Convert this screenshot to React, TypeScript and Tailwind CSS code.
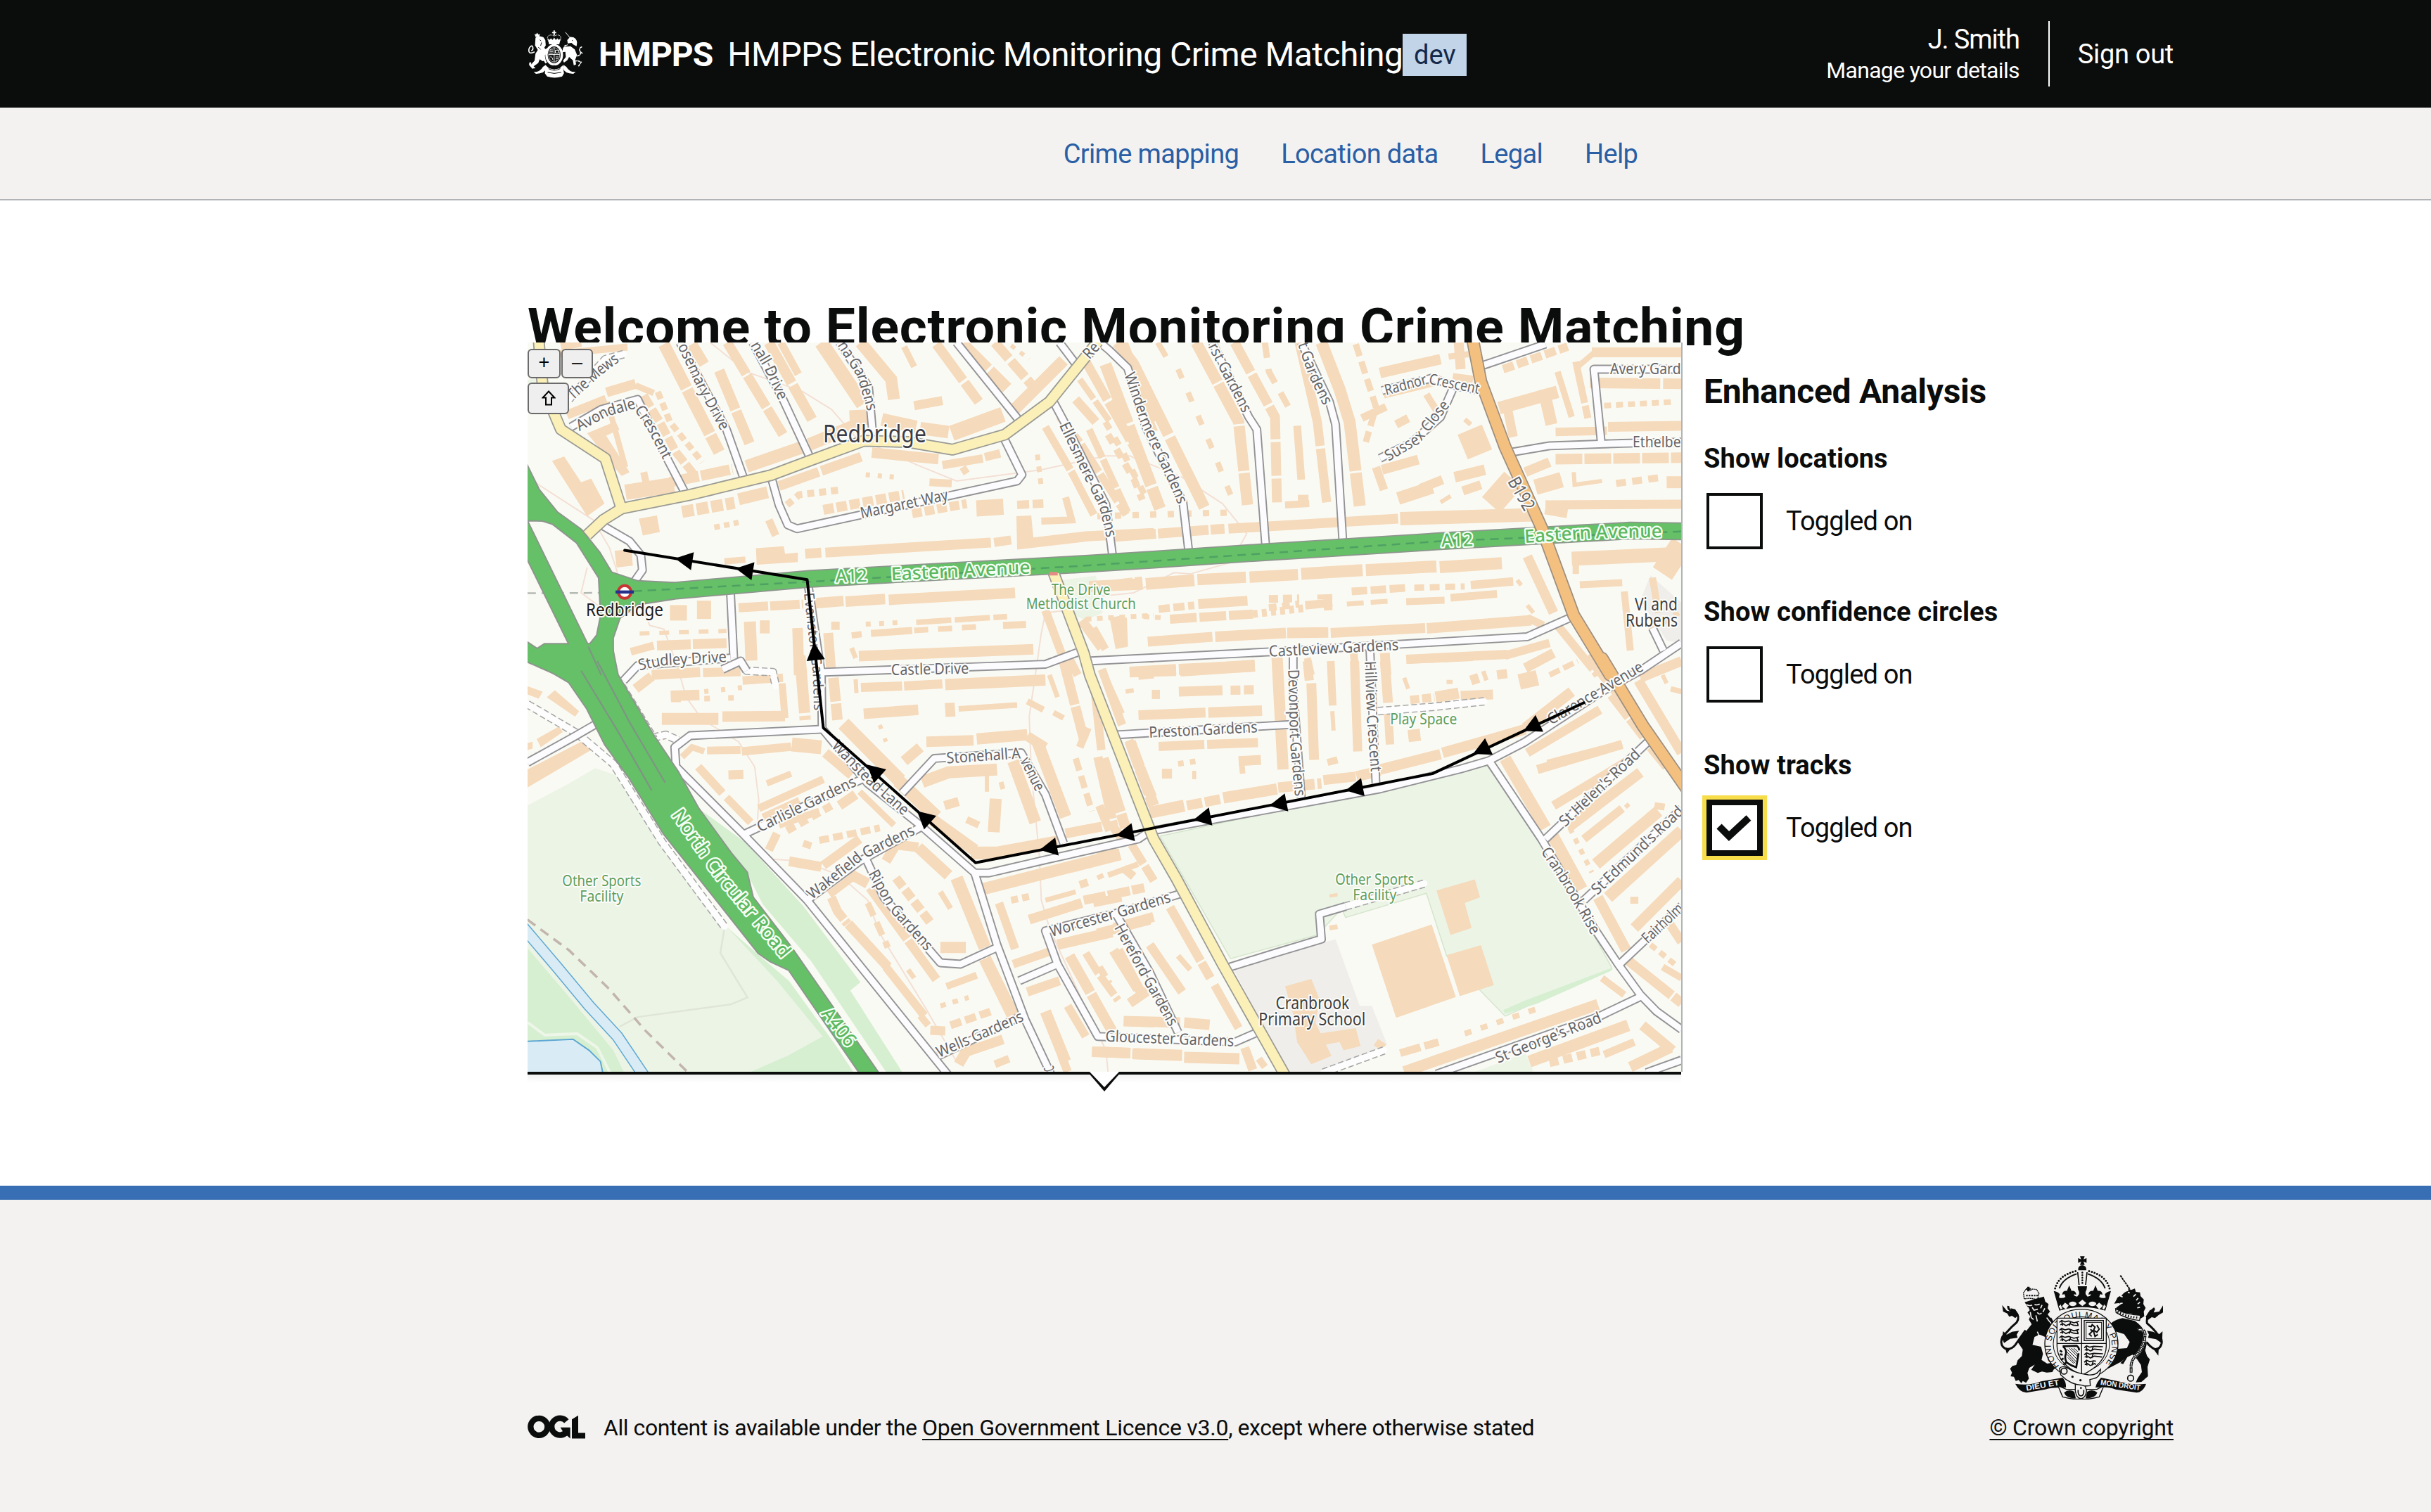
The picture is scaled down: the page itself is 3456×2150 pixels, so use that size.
type Pt = [number, number];
type Region = "A" | "B" | "C" | "D";

// Map sheets: origin of every sheet and its units per pixel.
const SHEETS: Record<Region, [number, number, number, number]> = {
  A: [740, 400, 1.7422, 2.8],
  B: [1560, 400, 1.7422, 2.8],
  C: [740, 940, 1.7422, 2.529],
  D: [1560, 940, 1.7422, 2.529],
};

function pts(src: string): Pt[] {
  let region: Region = "A";
  const out: Pt[] = [];
  for (const tok of src.trim().split(/\s+/)) {
    if (tok === "A" || tok === "B" || tok === "C" || tok === "D") {
      region = tok;
      continue;
    }
    const [x, y] = tok.split(",").map(Number);
    const [ox, oy, sx, sy] = SHEETS[region];
    out.push([ox + x / sx, oy + y / sy]);
  }
  return out;
}

const line = (src: string, close = false) =>
  "M" + pts(src).map((p) => p[0].toFixed(1) + " " + p[1].toFixed(1)).join("L") + (close ? "Z" : "");

const length = (src: string) => {
  const p = pts(src);
  let sum = 0;
  for (let i = 1; i < p.length; i++) sum += Math.hypot(p[i][0] - p[i - 1][0], p[i][1] - p[i - 1][1]);
  return sum;
};

const MINOR = [
  "A 395,244 510,590 552,780",
  "A 575,244 650,470 715,695",
  "A 790,244 862,420 872,600",
  "A 1080,244 1238,560",
  "A 1335,244 1378,335",
  "B 0,235 30,275 75,345 120,580 212,880 226,1070",
  "A 1320,480 1350,570 1450,890 1466,1090",
  "A 1196,620 1242,770 1230,795 685,985 662,970 640,890 620,775",
  "A 125,580 200,510 290,470 345,650 405,835",
  "A 200,970 270,1035 298,1090 302,1150 280,1200",
  "A 520,1240 528,1500",
  "A 255,1590 290,1530 520,1500",
  "A 712,1205 745,1560 C 747,250",
  "A 740,1557 1300,1525 1378,1478",
  "A 1405,1512 B 430,1475 1065,1415 1170,1340",
  "B 285,244 375,540 395,590 417,1055",
  "B 505,244 575,480 590,570 608,1035",
  "B 955,335 1110,250",
  "B 1447,350 1230,350 1248,640",
  "B 1020,682 1120,655 1300,645 1447,640",
  "B 705,435 830,385 880,415 950,435",
  "B 880,430 850,540 780,640 700,705",
  "B 1375,1380 1402,1470",
  "C 747,245 420,268 382,310 385,380 550,620 710,860 1060,1490",
  "C 747,243 860,440 990,590 1125,762 1180,1020 1250,1290 1315,1490",
  "C 1125,762 1160,762 1300,715 1530,640 D 130,612 400,540 700,460 900,388 970,358 1060,290 1250,110 B 1350,1545 1447,1440",
  "C 945,475 1025,350 1240,330 1300,480 1345,655",
  "C 555,622 860,415",
  "C 710,860 840,720 1000,590",
  "C 855,710 900,850 1040,1085 1090,1090 1180,1030",
  "C 1235,1150 1330,1090 1300,970 1480,905 D 210,835",
  "C 1330,1090 1430,1350 1770,1370 1825,1335",
  "C 1475,910 D 130,1120 200,1335",
  "C 1035,1420 1250,1270",
  "C 17,365 135,270 185,228",
  "D 50,265 480,228",
  "B 485,1490 D 485,100 505,490",
  "B 675,1460 D 690,440",
  "D 970,358 1100,640 1230,960 1290,1090 1345,1200 1385,1260 1447,1325",
  "D 1110,640 1380,268",
  "D 1205,860 1447,530",
  "D 1290,1095 1447,880",
  "D 1348,1205 1240,1280 840,1485",
  "D 1360,1480 1447,1435",
  "D 325,1102 440,1050 555,1000 550,910 615,882",
  "C 500,30 545,0 560,35",
];

const DASHED = [
  "A 120,470 210,310 255,290",
  "C 17,155 140,260 230,370 350,650 505,955",
  "C 330,275 360,265 390,285",
  "C 250,90 330,280",
  "C 545,5 560,35 625,40 632,90",
  "D 615,882 810,800",
  "D 695,180 830,165 958,145",
  "D 560,1480 710,1400",
];

const YELLOW = [
  "A 45,235 55,420 100,590 210,705 248,895",
  "A 165,1010 205,950 250,905 420,850 620,772 720,712 850,635 960,640 1070,670 1200,610 1310,480 1380,340 1430,240",
  "A 1320,1160 1395,1480 C 1410,50 1568,640 D 195,780 310,1090 465,1490",
];

const B192 = "B 930,235 950,400 1010,660 1100,980 1180,1330 1270,1568 D 1250,-10 1350,230 1460,460";
const A12 = "A 360,1235 720,1184 1400,1125 1568,1108 B 400,1080 850,1035 1200,1003 1320,993 1460,996";
const GREEN_A =
  "A 10,715 45,830 90,920 150,990 195,1080 225,1160 290,1195 380,1202 380,1263 290,1285 245,1340 228,1420 228,1500 245,1600 130,1600 90,1565 10,1508 10,1432 60,1485 100,1500 135,1490 10,1080 10,935 168,1455 190,1410 200,1330 195,1180 140,1040 80,965 55,952 10,950";
const GREEN_C =
  "C 10,-15 75,37 120,75 165,170 210,300 270,420 355,620 470,830 590,1050 620,1080 665,1110 845,1490 890,1490 670,1030 575,850 560,760 520,690 440,530 390,400 330,270 240,50 225,-60 60,-60";

// Building footprints: "points | depth | dash pattern"
const ROWS = `
A 355,250 492,680|17|70 3
A 425,250 455,330|15
A 492,355 567,645|15|60 3
A 512,244 650,610|14|52 3
A 615,244 722,550|15|66 4
A 645,244 688,370|11
A 745,244 848,490|20
A 842,244 918,390 925,470|17
A 950,260 975,340|9
A 1030,250 1135,480|14|64 4
A 1095,250 1205,425|17|50 4
A 1175,244 1270,420|14|30 5
A 1215,255 1260,310|6|7 9
A 560,737 695,662|18
A 715,650 850,560|18
A 815,545 870,540|22
A 895,550 980,580|18
A 990,585 1060,600|18
A 1068,605 1195,530|22
A 1220,515 1345,315|17
A 975,495 1045,475|13
A 370,800 525,748|15|42 3
A 260,840 380,810|22
A 305,760 315,830|10
A 540,868 612,840|17
A 640,815 850,695|14|60 4
A 870,682 1035,708|15
A 1045,732 1145,705|12
A 1095,740 1105,765|10
A 1150,700 1188,685|12
A 400,918 530,882|17|17 4
A 115,532 212,470|13
A 213,442 285,408|14
A 285,415 330,445|9
A 85,290 265,262|10
A 100,260 150,244|12
A 305,455 345,560 385,680 430,770|12|19 4
A 340,440 370,560 450,720|9|11 6
A 215,480 260,740|8
A 755,1080 1165,1040|14
A 1173,1040 1215,1030|13
A 705,1085 745,1080|14
A 505,1115 557,1108|9
A 750,910 950,850|14|15 4
A 660,890 690,850 795,830|10|10 7
A 970,925 1105,885|13|14 4
A 1013,800 1068,805|11
A 615,950 632,1012|11
A 480,980 540,960|8|8 6
A 855,770 930,780|7|6 11
A 1230,890 1295,885|12|17 5
A 1350,860 1365,950 1290,955|10
A 1280,690 1290,820|7|8 9
A 540,1300 700,1285|13|42 3
A 705,1285 800,1273|15
A 805,1275 903,1265|15
A 912,1268 1225,1240|15
A 370,1320 412,1320|22
A 437,1308 472,1308|26
A 338,1450 515,1440|14|48 3
A 273,1475 330,1450|11
A 295,1402 510,1392|6|14 14
A 568,1355 572,1510|17
A 605,1350 605,1402|14
A 686,1380 690,1568|15|80 4
A 762,1400 770,1568|14
A 780,1355 780,1388|12
A 820,1410 845,1405|9
A 868,1402 970,1390|10
A 855,1365 950,1358|7|7 12
A 980,1358 1205,1335|8|50 5
A 975,1390 1140,1375|8|20 14
A 1195,1370 1252,1366|10
A 820,1460 830,1500|7
A 838,1492 1270,1465|15
A 1300,1310 1360,1568|12|70 4
A 1355,1490 1380,1568|12
A 1390,1350 1440,1460|14
A 1487,1340 1490,1455|17
A 1400,1345 1568,1330|7|8 8
A 1430,1215 1540,1195|14|50 3
A 1560,1500 1568,1500|14
A 1300,580 1365,760 1420,930|11|70 3
A 1335,540 1385,640 1500,930|11|46 4
A 1375,470 1425,560|13
A 1385,390 1460,560|9|34 4
A 1400,320 1530,690 1560,800|13|62 4
A 1455,610 1520,790 1540,870|10|14 10
A 1490,244 1568,560|16
A 1510,380 1568,600|13
B 20,330 155,905|17|90 4
B 50,244 90,330 265,900|16|150 5
B -20,590 75,920|10|44 3
B 20,560 60,670 120,860|9|12 14
B 150,244 170,300|8
B 200,350 280,650 330,850|8|14 22
B 245,244 350,560 372,890|16|64 3
B 340,244 440,540 445,880|14|48 4
B 415,244 425,360 480,520|9|22 16
B 500,244 545,560 568,880|13|150 4
B 495,575 505,790|11
B 555,244 600,430 625,560 650,895|17|190 3
B 640,250 690,500 665,640|9|18 8
B 700,365 850,310|15
B 710,455 850,400|8
B 740,570 770,545|12
B 655,545 715,500|11
B 815,450 850,540|10
B 690,740 710,830|12
B 705,750 795,710|14
B 745,865 830,820|18
B 800,825 855,790|13
B 885,780 960,750|15
B 905,835 950,810|13
B 905,660 965,620|38
B 910,550 925,570|7
B 850,880 875,855|6
B 465,890 525,885|10
B 510,850 510,895|15
B 870,300 920,290|9
B 880,385 930,395|14
B 895,244 900,350|14
B 995,505 1140,440|18
B 1015,500 1030,620|13
B 1105,430 1125,570|17
B 1140,360 1175,540|9
B 1185,320 1215,545|10|60 4
B 1190,340 1230,285|8
B 1225,283 1447,283|14
B 1005,350 1165,260|12|16 5
B 1220,405 1447,408|15|100 4
B 1255,495 1430,480|8|10 7
B 1265,580 1447,575|14
B 1135,600 1262,595|12
B 1135,708 1447,702|15|38 3
B 1180,760 1182,810 1250,795|6
B 1285,805 1400,780|10|14 9
B 1410,800 1447,800|17
B 1060,760 1120,720|14
B 1085,820 1150,790|22
B 1110,890 1447,888|13
B 1110,900 1165,915|20
B 975,890 1030,790|34
B 750,945 1080,930|19
B 20,1020 315,985|14|72 3
B 325,985 745,945|14
B 0,935 340,920|9|9 16
B -20,1215 112,1205|16
B 120,1205 240,1190|17
B 248,1188 368,1178|16
B 377,1178 497,1168|16
B 505,1165 657,1150|17
B 665,1150 840,1135|17
B 848,1138 1002,1122|17
B 250,1285 372,1272|14
B 152,1305 240,1290|11|16 5
B 425,1265 500,1262|11|13 7
B 425,1300 500,1285|10|11 8
B 515,1290 582,1280|12
B 570,1250 572,1310|12
B 545,1257 582,1255|7
B 630,1235 770,1220|11|22 5
B 785,1220 910,1215|9|14 8
B 925,1210 1030,1195|12
B 618,1285 735,1272|7|24 10
B 765,1275 860,1270|10
B 875,1260 990,1245|11
B 115,1335 165,1340|7|8 8
B 180,1345 385,1325|13|38 4
B 385,1325 520,1300|11|7 6
B 125,1435 285,1415|14
B 292,1415 467,1400|15
B 470,1400 572,1398|15
B 578,1400 812,1380|14
B 816,1382 1075,1350|15
B 1065,1340 1105,1370|11
B 45,1335 60,1460|17
B -10,1380 20,1465|11
B 1065,1095 1130,1320|14
B 1065,1290 1080,1320|6
B 1040,1190 1050,1210|6
B 1175,1105 1447,1085|20
B 1400,1080 1447,1130|50
B 1185,1110 1185,1165|9
B 1195,1208 1300,1200|10
B 1305,1235 1320,1470|10|85 3
B 1375,1180 1390,1320|10|60 4
B 1440,1320 1360,1400|8|8 12
B 80,1555 195,1545|15
B 205,1550 390,1530|17
B 445,1500 450,1568|12
B 520,1500 530,1568|10
B 635,1480 640,1568|11
B 712,1480 716,1568|14
B 765,1505 1015,1485|13
B 1010,1490 1120,1440|12
B 1140,1370 1240,1568|12|80 4
B 1060,1540 1130,1480|14
C 325,50 445,40|14
C 452,42 545,38|13
C 550,70 650,60|12
C 285,100 325,55|14
C 372,125 443,122|15
C 385,125 385,148|14
C 455,110 550,95|7|6 18
C 455,135 540,132|8|8 26
C 350,208 490,208|17
C 500,200 655,198|15
C 648,80 655,205|10
C 692,-20 705,212|16|82 4
C 775,60 785,212|15|34 3
C 830,65 832,115|6
C 843,95 945,90|13
C 950,90 1045,82|13
C 1052,85 1300,68|16
C 850,190 985,175|15
C 1063,150 1065,200|14
C 1085,172 1230,158|8
C 1255,145 1295,175|9
C 1320,185 1345,205|8
C 1345,0 1395,280|14|64 3
C 1440,30 1490,230|12
C 1530,50 1568,45|14
C 1310,50 1330,130|7
C 1430,345 1470,600 1490,640|13|90 3
C 1510,290 1568,520|16|38 3
C 1405,240 1385,310|11
C 1375,350 1415,540|9|18 8
C 1435,520 1455,610|7
C 800,225 940,430|20
C 935,430 1030,560|19
C 1010,560 1125,680|17
C 1115,690 1180,690 1330,650|18
C 1350,620 1440,595|14
C 1005,290 1122,285|15
C 1130,280 1255,265|16
C 1255,270 1300,310|14
C 1280,290 1350,560|17
C 1220,360 1275,580|17
C 950,360 990,310|15
C 995,435 1060,400 1180,390|17
C 1050,520 1085,505|13
C 1177,495 1172,615|17
C 1105,570 1135,590|10
C 1155,410 1155,470|6
C 1190,435 1195,460|7
C 890,230 905,290|6|6 14
C 400,345 425,310 455,325|9
C 462,322 545,320|11
C 548,325 670,308|12
C 672,300 745,310|20
C 755,330 820,410|14
C 440,380 500,475|12
C 510,490 570,580|11
C 515,410 552,408|13
C 590,530 750,425|11
C 610,440 670,405|9
C 600,560 690,500|9
C 790,520 830,480|14
C 660,610 770,520|11|13 7
C 840,470 925,590|9
C 615,680 635,620|12
C 700,655 720,665|10
C 740,645 890,600|10|14 6
C 665,720 745,740|14
C 750,735 840,640|13
C 640,590 740,540|10
C 815,765 860,800|15
C 765,840 820,780|11
C 865,815 1030,1145|13|90 3
C 770,850 785,900 810,945|13|36 3
C 812,945 910,1100|14
C 905,1100 1000,1275|12
C 990,1275 1010,1310|10
C 1015,1328 1052,1330|13
C 905,720 930,660 985,670|14
C 985,670 1060,770|16
C 930,780 1015,940|13|16 5
C 1040,830 1065,890|8
C 1080,780 1150,1030|18
C 1150,1070 1225,1290|18
C 1040,1030 1103,1030|16
C 860,870 910,1030|9|20 10
C 960,1110 975,1140|7
C 1055,1170 1130,1130|10
C 1065,1310 1165,1260|11|16 6
C 1040,1240 1110,1210|7|8 10
C 1095,1410 1195,1360|14
C 1175,1450 1210,1430|11
C 1085,1450 1105,1400|15
C 1145,820 1485,695|17
C 1185,870 1225,1035|12
C 1215,860 1265,845|10|10 6
C 1260,930 1390,870|14
C 1395,860 1545,815|13|32 3
C 1300,860 1375,830|7
C 1385,805 1405,795|11
C 1455,770 1530,730|8
C 1330,1020 1465,975|15
C 1470,960 1568,920|14
C 1220,1090 1310,1045|12
C 1255,1190 1335,1150|13
C 1360,1060 1465,1330|15|60 3
C 1400,1050 1430,1120 1480,1220|11|34 4
C 1480,1040 1540,1200|14
C 1300,1260 1350,1440|16
C 1355,1240 1400,1350|12
C 1495,1295 1568,1300|14
C 1415,1405 1510,1410|15
C 1515,1412 1568,1415|15
C 1340,1420 1355,1477|12
D 10,30 60,190|10
D -10,60 10,320|12
D 80,40 195,35|15
D 202,30 390,18|16
D 202,110 310,105|14
D 330,105 395,103|13|14 5
D 135,120 155,120|13
D 70,110 90,105|6
D 102,195 268,185|14
D 275,185 408,178|15
D 152,307 265,300|13
D 272,300 398,293|13
D 78,285 100,360|13
D 100,365 135,490|15
D 15,350 70,600|15|80 3
D 5,520 30,610|12
D 445,-20 460,390|16
D 520,0 525,70|13
D 530,80 537,355|14
D 578,0 583,160|11
D 582,180 585,250|6
D 637,0 645,325|13|130 3
D 712,0 720,150|14
D 720,180 725,300|12
D 760,60 770,100|6
D 350,360 405,355|14
D 358,375 360,405|8
D 160,405 185,405|14
D 200,370 245,360|8|8 9
D 235,410 245,410|12
D 130,545 215,520|17
D 222,520 310,495|14|22 4
D 312,492 445,460|16
D 448,455 555,440|15|24 4
D 560,428 640,415|14
D 642,415 700,395|15
D 700,390 850,335|15
D 855,330 990,275 1060,245|15
D 1060,240 1175,110|15
D 570,365 595,355|10
D 770,270 800,265|17
D 775,140 835,130|12|13 4
D 838,130 895,115|16
D 900,125 980,120|14
D 865,75 880,75|6
D 925,70 965,50|14|12 6
D 1045,75 1090,60|22
D 990,50 1015,45|13
D 770,0 930,-10|8
D 1120,50 1190,0|8|16 6
D 1215,-20 1290,120|14
D 1275,120 1355,270|16|40 3
D 1065,330 1245,175|13
D 1090,390 1300,300|13
D 1010,350 1110,600|17
D 1115,370 1300,300|12
D 1130,520 1330,345|13
D 1370,310 1410,380|13
D 1165,600 1345,400|15
D 1205,640 1300,530|12
D 1235,730 1390,540|17
D 1290,550 1320,510|6|7 7
D 1380,520 1405,525|10
D 1265,850 1447,610|17
D 1125,620 1200,820|17
D 1330,960 1447,790|15
D 1240,850 1310,1040|15
D 1170,600 1225,760|7|8 9
D 1320,860 1340,860|10
D 1300,1060 1447,1230|14|90 3
D 1415,940 1447,1010|13
D 1400,1100 1447,1140|10
D 1370,1020 1430,1090|8|10 7
D 1340,70 1447,330|14
D 1345,60 1447,0|14
D 1400,50 1410,80|6
D 1420,100 1447,110|8
D 750,1410 845,1370|11|30 6
D 910,1340 1090,1250|8|10 14
D 760,1477 1240,1235|16
D 1250,1140 1305,1200|10
D 1070,1440 1315,1310|17
D 1120,1445 1250,1400|12|13 7
D 1255,1415 1330,1370|11
D 1320,1460 1420,1390|15
D 1350,1310 1425,1400|14
D 690,1370 710,1390|11
D 65,1295 205,1300|15
D 215,1300 278,1308|15
D 0,1405 82,1410|15
D 90,1412 210,1418|16
D 215,1425 352,1430|16
D 290,1165 350,1320|12
D 180,885 280,1140|13|88 3
D 130,1020 210,1190|13
D 40,1040 100,1180|14
D 80,1230 150,1160|14
D 200,1060 230,1110|8
D 5,1100 30,1160|10|16 8
D -10,870 60,850|12
D 85,660 140,790|12|32 4
D 0,710 55,695|17
D 65,745 90,775|12
D 0,780 15,770|7
D 0,980 130,930|14
D 365,1390 385,1470|13
D 400,1430 415,1460|10
D 575,960 595,955|7
D 575,845 595,840|5
`;

const BLOCKS = [
  "A 78,715 108,697 150,800 175,785 208,885 165,935",
  "A 165,605 235,558 245,590 212,615 270,760 250,775",
  "A 583,1063 652,1055 655,1085 687,1080 687,1118 585,1128",
  "A 233,1073 275,1065 278,1132 238,1140",
  "A 293,945 338,932 345,998 303,1012",
  "A 1128,872 1195,865 1197,930 1130,937",
  "A 1228,935 1265,932 1270,1020 1400,995 1568,982 1568,1022 1410,1035 1230,1068",
  "C 17,390 150,290 175,320 17,455",
  "C 65,130 85,105 145,180 135,200",
  "C 17,90 55,110 45,135 17,120",
  "C 40,280 95,235 105,255 50,310",
  "C 17,295 30,290 30,315 17,320",
  "D 680,1020 828,947 888,1208 740,1283",
  "D 840,825 935,785 948,850 910,870 927,960 875,985",
  "D 865,1058 950,1022 982,1165 898,1205",
  "D 465,1170 530,1143 550,1215 540,1300 580,1420 530,1450 495,1370 485,1270",
  "D 545,1340 640,1320 652,1385 610,1400 600,1370 560,1380",
];

type Label = [string, string, number];
const LABELS: Label[] = [
  ["The Mews", "A 122,460 190,360 240,300", 22],
  ["Avondale", "A 140,580 210,520 285,485", 22],
  ["Crescent", "A 292,500 325,580 365,705", 22],
  ["osemary Drive", "A 400,250 450,420 508,590", 22],
  ["nall Drive", "A 580,244 615,340 652,470", 22],
  ["na Gardens", "A 795,244 845,370 872,515", 22],
  ["Re", "A 1400,300 1428,250", 22],
  ["Margaret Way", "A 842,925 1060,850", 22],
  ["Ellesmere Gardens", "A 1345,565 1400,750 1445,890 1464,1020", 22],
  ["Windermere Gardens", "B 78,365 120,560 190,800 212,885", 22],
  ["rst Gardens", "B 285,250 330,390 372,520", 22],
  ["t Gardens", "B 508,244 535,370 572,490", 22],
  ["Radnor Crescent", "B 712,435 820,388 870,405 948,430", 21],
  ["Sussex Close", "B 715,700 790,630 865,480", 22],
  ["Avery Gard", "B 1270,350 1447,350", 22],
  ["Ethelbe", "B 1326,642 1447,642", 22],
  ["Castleview Gardens", "B 425,1475 748,1448", 22],
  ["Castle Drive", "A 918,1548 1112,1542", 22],
  ["Studley Drive", "A 292,1530 350,1510 512,1495", 22],
  ["Evanston Gardens", "A 713,1240 735,1560 C 738,180", 20],
  ["Wanstead Lane", "C 778,295 860,420 958,545", 22],
  ["Stonehall A", "C 1055,350 1240,332", 22],
  ["venue", "C 1248,350 1288,465", 22],
  ["Carlisle Gardens", "C 588,600 830,430", 22],
  ["Wakefield Gardens", "C 715,845 840,700 975,605", 22],
  ["Ripon Gardens", "C 872,755 920,880 1015,1035", 22],
  ["Worcester Gardens", "C 1312,975 1480,905 D 182,848", 22],
  ["Hereford Gardens", "D 52,950 120,1130 190,1310", 22],
  ["Gloucester Gardens", "D 20,1350 340,1368", 22],
  ["Wells Gardens", "C 1032,1410 1245,1275", 22],
  ["C", "C 1312,1475 1308,1455", 20],
  ["Preston Gardens", "D 128,258 398,238", 22],
  ["Devonport Gardens", "D 485,30 490,300 502,488", 22],
  ["Hillview Crescent", "D 675,0 680,200 690,400", 22],
  ["Clarence Avenue", "D 1118,215 1230,120 1350,15", 22],
  ["St Helen's Road", "D 1150,585 1340,325", 22],
  ["St Edmund's Road", "D 1230,830 1447,530", 22],
  ["Fairholm", "D 1355,1005 1447,880", 22],
  ["Cranbrook Rise", "D 1108,675 1165,800 1236,980", 22],
  ["St George's Road", "D 988,1430 1248,1280", 22],
  ["B192", "B 1028,785 1072,910", 26],
];
const GREEN_LABELS: Label[] = [
  ["A12", "A 780,1176 860,1172", 26],
  ["Eastern Avenue", "A 918,1168 1264,1140", 26],
  ["A12", "B 852,1034 932,1030", 26],
  ["Eastern Avenue", "B 1058,1018 1230,1000 1400,996", 26],
  ["North Circular Road", "C 385,540 490,760 660,1060", 27],
  ["A406", "C 755,1255 822,1380", 27],
];
type Place = [string, string, number, number, string];
const PLACES: Place[] = [
  ["Redbridge", "A 877,641", 34, 147, "#3c3c46"],
  ["Redbridge", "A 258,1334", 25, 110, "#1c1c1c"],
  ["The Drive", "A 1388,1248", 22, 84, "#5c9e5c"],
  ["Methodist Church", "A 1388,1304", 22, 156, "#5c9e5c"],
  ["Other Sports", "C 201,809", 22, 112, "#5c9e5c"],
  ["Facility", "C 201,865", 22, 62, "#5c9e5c"],
  ["Play Space", "D 808,227", 22, 95, "#5c9e5c"],
  ["Other Sports", "D 687,804", 22, 112, "#5c9e5c"],
  ["Facility", "D 687,861", 22, 62, "#5c9e5c"],
  ["Cranbrook", "D 533,1253", 25, 105, "#3f3f3f"],
  ["Primary School", "D 532,1310", 25, 152, "#3f3f3f"],
  ["Vi and", "B 1384,1310", 25, 61, "#3f3f3f"],
  ["Rubens", "B 1373,1374", 25, 74, "#3f3f3f"],
];

const TRACK = "A 258,1071 710,1188 C 750,240 1127,725 D 830,405 1205,150";
const ARROWS: [string, number][] = [
  ["A 405,1109", 3],
  ["A 555,1149", 3],
  ["A 729,1475", 2],
  ["C 875,394", 1],
  ["C 999,561", 1],
  ["C 1308,673", 0],
  ["C 1497,621", 0],
  ["D 260,565", 0],
  ["D 448,514", 0],
  ["D 637,459", 0],
  ["D 951,320", -1],
  ["D 1076,237", -1],
];
const HEADINGS: Record<number, number> = (() => {
  const p = pts(TRACK);
  const a = (i: number, j: number) => (Math.atan2(p[j][1] - p[i][1], p[j][0] - p[i][0]) * 180) / Math.PI;
  return { 3: a(1, 0), 2: a(2, 1), 1: a(3, 2), 0: a(4, 3), [-1]: a(5, 4) };
})();

function Roads({ list, casing, fill, w, cw }: { list: string[]; casing: string; fill: string; w: number; cw: number }) {
  return (
    <g fill="none" strokeLinejoin="round">
      {list.map((r, i) => (
        <path key={"c" + i} d={line(r)} stroke={casing} strokeWidth={cw} />
      ))}
      {list.map((r, i) => (
        <path key={"f" + i} d={line(r)} stroke={fill} strokeWidth={w} />
      ))}
    </g>
  );
}

function PathLabels({ list, id, fill, halo, haloWidth, weight }: { list: Label[]; id: string; fill: string; halo: string; haloWidth: number; weight: number }) {
  return (
    <g fontFamily="'Noto Sans', 'Open Sans', sans-serif" fontWeight={weight} fill={fill} stroke={halo} strokeWidth={haloWidth} strokeLinejoin="round" paintOrder="stroke">
      {list.map(([text, path, size], i) => (
        <g key={i}>
          <path id={id + i} d={line(path)} fill="none" stroke="none" />
          <text fontSize={size} dy={size * 0.32} textLength={length(path) - 1} lengthAdjust="spacingAndGlyphs">
            <textPath href={"#" + id + i} textLength={length(path) - 1} lengthAdjust="spacingAndGlyphs">
              {text}
            </textPath>
          </text>
        </g>
      ))}
    </g>
  );
}

function StreetMap() {
  const rows = ROWS.trim().split("\n").map((r) => r.split("|"));
  const [ux, uy] = pts("A 258,1237")[0];
  return (
    <svg viewBox="750 487 1640 1037" className="block h-[1037px] w-[1640px]">
      <rect x="750" y="487" width="1640" height="1037" fill="#fafaf4" />
      <g fill="#ecf4e6">
        <path d={line("C 10,525 120,440 185,385 235,410 360,680 510,955 635,1150 748,1350 570,1490 10,1490", true)} />
        <path d={line("D 155,630 965,375 1100,640 1275,1105 1010,1277 865,1060 815,835 615,922 605,890 545,985 330,1070", true)} stroke="#d5e6cc" strokeWidth="1.5" />
        <path d={line("A 1340,1190 1425,1172 1442,1320 1400,1350 1370,1330", true)} />
        <path d={line("A 10,395 45,385 45,415 10,415", true)} />
        <path d={line("D 935,1477 1060,1410 1080,1477", true)} />
      </g>
      <g fill="#d6efd1">
        <path d={line("C 10,1020 110,1190 230,1400 260,1490 10,1490", true)} />
        <path d={line("C 510,955 600,1070 665,1150 780,1380 830,1490 550,1490 660,1420 748,1350 635,1150", true)} />
        <path d={line("C 425,515 470,560 555,650 700,880 842,1155 817,1185 945,1477 905,1477 720,1080 600,875 560,760 520,690", true)} />
        <path d={line("D 1005,1255 1060,1220 1275,1103 1275,1112 1090,1232 1010,1268", true)} />
      </g>
      <g fill="#f0eeea">
        <path d={line("D 335,1102 590,1000 650,1240 680,1240 718,1380 560,1477 470,1477", true)} />
        <path d={line("B 1370,1170 1447,1280 1447,1440 1410,1430 1345,1270", true)} />
      </g>
      <path d={line("C 505,960 495,1050 562,1210 520,1235 290,1280 245,1315")} fill="none" stroke="#dfe6d8" strokeWidth="2.5" />
      <path d={line("C 18,1300 60,1345 140,1340 190,1390 225,1490")} fill="none" stroke="#edf6e8" strokeWidth="4" />
      <path d={line("C 10,1368 130,1360 170,1400 198,1440 205,1490 10,1490", true)} fill="#d9ecf6" stroke="#5fa8d3" strokeWidth="2" />
      <Roads list={["C 5,955 90,1100 170,1240 240,1350 305,1490"]} casing="#5fa8d3" fill="#d9ecf6" w={14} cw={17} />
      <path d={line("C 17,930 120,1040 220,1180 310,1330 415,1480")} fill="none" stroke="#c2b5ae" strokeWidth="3.5" strokeDasharray="14 9" />
      <g fill="none" stroke="#f3e0d5" strokeWidth="2">
        <path d={line("A 470,244 560,360 700,440 770,510 830,620 980,730 1080,795 1290,750 1450,695 B 80,695 210,780 310,885 370,1005 330,1120 230,1165 190,1160 90,1240 0,1255")} />
        <path d={line("A 40,805 180,950 220,1060 240,1160")} />
        <path d={line("A 165,1140 150,1240 200,1300 310,1330 320,1370 355,1385 390,1540 C 410,130 450,210 540,290 580,380 590,500 585,620")} />
        <path d={line("A 1400,1300 1300,1320 1290,1400 1275,1568 C 1260,200 1265,400 1285,700 1290,860 1310,960 1400,1250 1450,1400 1455,1477")} />
        <path d={line("C 600,710 700,720 790,770 860,860 890,980 1000,1240 1080,1440")} />
      </g>

      <g fill="none" stroke="#f5dabb">
        {rows.map(([p, w, dash], i) => (
          <path key={i} d={line(p)} strokeWidth={w} strokeDasharray={dash} />
        ))}
      </g>
      <g fill="#f5dabb">
        {BLOCKS.map((b, i) => (
          <path key={i} d={line(b, true)} />
        ))}
      </g>

      <g fill="none" strokeLinecap="round" strokeLinejoin="round">
        {DASHED.map((d, i) => (
          <g key={i}>
            <path d={line(d)} stroke="#a4a4a4" strokeWidth="12" strokeLinecap="butt" strokeDasharray="8 4" />
            <path d={line(d)} stroke="#fdfdfd" strokeWidth="9" />
          </g>
        ))}
      </g>
      <Roads list={MINOR} casing="#939396" fill="#fcfcff" w={9} cw={12.8} />
      <path d={line("A 17,1242 240,1240")} stroke="#b5bab5" strokeWidth="2.5" strokeDasharray="12 8" fill="none" />
      <g stroke="#8d968d" strokeWidth="4" strokeLinejoin="round" fill="none">
        <path d={line(GREEN_A, true)} />
        <path d={line(GREEN_C, true)} />
        <path d={line(A12)} strokeWidth="25.5" />
      </g>
      <Roads list={YELLOW} casing="#9a9a94" fill="#fbf0b8" w={13.5} cw={17} />
      <g fill="#65c067">
        <path d={line(GREEN_A, true)} />
        <path d={line(GREEN_C, true)} />
        <path d={line(A12)} fill="none" stroke="#65c067" strokeWidth="22" />
      </g>
      <path d={line("A 280,1234 720,1196 1400,1132 B 400,1085 850,1035 1447,996")} stroke="#4fa163" strokeWidth="2.5" strokeDasharray="12 8" fill="none" />
      <g fill="none" stroke="#7f9485" strokeWidth="2.2">
        <path d={line("C 150,35 240,250 325,465")} />
        <path d={line("C 190,0 270,220 358,437")} />
        <path d={line("A 168,1455 200,1568")} />
      </g>
      <Roads list={[B192]} casing="#9c8f80" fill="#f4c080" w={15} cw={18.5} />
      <rect x={pts("A 1320,1160")[0][0] - 6} y={pts("A 1320,1160")[0][1] - 1} width="12" height="5" fill="#e58b86" />

      <PathLabels list={LABELS} id="street" fill="#646467" halo="#fcfcfa" haloWidth={4.5} weight={400} />
      <PathLabels list={GREEN_LABELS} id="trunk" fill="#5bb860" halo="#f6fff4" haloWidth={4.5} weight={500} />
      <circle cx={ux} cy={uy} r="9" fill="#fff" stroke="#c93434" strokeWidth="4" />
      <rect x={ux - 13} y={uy - 2.2} width="26" height="4.4" fill="#26308c" />
      <g fontFamily="'Noto Sans', 'Open Sans', sans-serif" stroke="#fcfcfa" strokeWidth="4" strokeLinejoin="round" paintOrder="stroke" textAnchor="middle">
        {PLACES.map(([text, at, size, w, fill], i) => {
          const [x, y] = pts(at)[0];
          return (
            <text key={i} x={x} y={y} fontSize={size} fill={fill} textLength={w} lengthAdjust="spacingAndGlyphs">
              {text}
            </text>
          );
        })}
      </g>

      <path d={line(TRACK)} fill="none" stroke="#000" strokeWidth="4" strokeLinejoin="round" strokeLinecap="round" />
      {ARROWS.map(([at, seg], i) => {
        const [x, y] = pts(at)[0];
        return <path key={i} d="M-13 0L12 -13V13Z" transform={`translate(${x} ${y}) rotate(${HEADINGS[seg] + 180})`} />;
      })}
    </svg>
  );
}

function HeaderCrest() {
  return (
    <svg viewBox="32 58 238 204" className="h-[68px] w-[79px]" fill="#fff">
      <path d="M143 58h6v7h6v5h-6v10h-6V70h-6v-5h6z" />
      <path d="M119 98q-6-18 12-20 10 0 15 6 5-6 15-6 18 2 12 20l-5 12H124z" fill="none" stroke="#fff" strokeWidth="3" strokeDasharray="4 2" />
      <path d="M119 92l7 7 6-7 7 7 7-10 7 10 7-7 6 7 7-7-5 26h-44z" />
      <ellipse cx="146" cy="163" rx="33" ry="41" fill="none" stroke="#fff" strokeWidth="10" />
      <ellipse cx="146" cy="163" rx="24" ry="31" fill="none" stroke="#fff" strokeWidth="2" />
      <path d="M146 132v62M122 162h48M128 142h13M128 150h13M151 143h14v12h-14zM129 172q8-4 11 12M152 172h13M152 180h11M126 156h14M152 187h7" fill="none" stroke="#fff" strokeWidth="3" />
      <path d="M62 72l6 4 5-8 5 8 7-2-3 12H66z" />
      <path d="M66 90q14-12 34-2l8 12 2 22-6 10 12 20-10 14 4 20-14 4-12-8-6 16-20 14 8 8-14 2-10-12 20-22 4-30 10-16-12-20z" />
      <path d="M62 150q-28 14-24-12 4-12 14-14M52 124q8 14-4 22" fill="none" stroke="#fff" strokeWidth="5" />
      <path d="M46 196q-8 8 2 14l8 10M92 150l26-12M100 178l12 20" fill="none" stroke="#fff" strokeWidth="8" />
      <path d="M194 66l20 24" stroke="#fff" strokeWidth="3" />
      <path d="M202 100l12-14 14 2q14 6 16 22l-2 16-12-6-10-8-16 2z" />
      <path d="M190 128l26-2 18 14 10 24-8 20 4 20-10 4-4-22-16-14-8 14-14 10-4-8 12-16-2-22-14 2 2-10z" />
      <path d="M244 168q22-4 12-22-6-12 10-18M258 150l10 8M184 140l8-16 12-4M232 190l14-2 16 6-12 18" fill="none" stroke="#fff" strokeWidth="4.5" strokeDasharray="12 2" />
      <path d="M58 236q26 2 40-22l12-8 4 12q-8 26-46 26zM238 236q-26 2-40-22l-12-8-4 12q8 26 46 26z" />
      <path d="M110 208l14 12q22 8 46 0l12-12 6 34-8 14q-32 10-64 0l-10-14z" />
      <path d="M122 222q24 14 50 0M146 206v22" fill="none" stroke="#0b0c0c" strokeWidth="3" />
      <path d="M118 238q28 9 58 0M84 98l6 6M92 110l-4 14M78 130l10 10M222 100l4 3" fill="none" stroke="#0b0c0c" strokeWidth="3" />
    </svg>
  );
}

function FooterCrest() {
  const ink = "#0b0c0c";
  const paper = "#f3f2f1";
  return (
    <svg viewBox="192 137 696 612" className="h-[204px] w-[232px]" fill={ink}>
      {/* crown */}
      <path d="M534 138h20l-5 13 13-5v20l-13-5 5 14h-20l5-14-13 5v-20l13 5z" />
      <path d="M526 198q-2-20 17-22 20 2 18 22z" />
      <g fill="none" stroke={ink}>
        <path d="M428 275q16-58 90-74M660 275q-16-58-90-74" strokeWidth="9" strokeDasharray="0 12" strokeLinecap="round" />
        <path d="M446 275q14-42 74-62M641 275q-14-42-74-62" strokeWidth="6" />
        <path d="M524 206l6 54M564 206l-6 54" strokeWidth="5" />
        <path d="M544 208v54" strokeWidth="8" strokeDasharray="0 11" strokeLinecap="round" />
      </g>
      <path d="M422 286q20 4 26 14l-4 14q14 6 28-2l-4-12-10 2q2-18 20-16l10-24 10 24q18-2 20 16l-10-2q0 10 14 10l8-10q2-12-4-20l-2-14h40l-2 14q-6 8-4 20l8 10q14 0 14-10l-10 2q2-18 20-16l10-24 10 24q18-2 20 16l-10-2-4 12q14 8 28 2l-4-14q6-10 26-14l-24 84q-98-30-196 0z" />
      <g fill={paper}>
        <path d="M456 352l14-16 16 12-12 16zM527 337l17-14 17 14-17 14zM602 348l14-12 16 14-16 14z" />
        <ellipse cx="503" cy="341" rx="16" ry="10" />
        <ellipse cx="587" cy="341" rx="16" ry="10" />
      </g>
      <path d="M442 352l10-10 8 18-8 8zM646 352l-10-10-8 18 8 8z" fill={paper} stroke={ink} strokeWidth="3" />

      {/* lion */}
      <path d="M296 320l-3-26 10-14 12-2 8 6 8-6 18 2 10 16-6 28q-28-10-57-4z" fill={paper} stroke={ink} strokeWidth="4" strokeDasharray="6 2" />
      <path d="M309 268h10v6h6v6h-6v8h-10v-8h-6v-6h6z" />
      <path d="M304 306h50" stroke={ink} strokeWidth="6" strokeDasharray="7 4" />
      <path d="M298 334q40-14 82-24l6 22 14 10-4 18 10 14-10 12 16 20 50 70 8 24-14 16-20-14-46-18-28-12-22 10-10 40-2 28 20 28-6 22-24 14-8 22 6 24-12 18-14-8-6 10-12-14-12 4-8-18-14-2 6-16-8-16 10-12 16-4 6-20 18-18 4-28-22-32 36-46 24-30-12-20 6-14-12-16 10-10z" />
      <path d="M372 404l40-4 10 20-24 26zM314 512l54 12 8 30-6 26 24 16 34-6 8 20-12 8-8 14-24 2-20-4-18 6-28-14 14-20 4-26-22-12z" />
      <path d="M306 344q12 8 24 2M340 344q12 4 22-2M330 356l8 12 16-4M322 376l4 24 10 8M352 378q8 12 18 2M346 390l6 26M372 346l-6 14M384 360l-8 16M392 400q16 26 48 50M312 356l4 14M352 460q10 16 2 40" fill="none" stroke={paper} strokeWidth="5" />
      <path d="M228 350q-2 22 30 24 22 22 6 46-24 20-44 44-20 12-22 40 2 26 26 30 20 0 34-18l44-62" fill="none" stroke={ink} strokeWidth="9" />
      <path d="M202 346l20 24 22 4-6-14 20 4 14 24-14 14-14-10-12 4-8-14-18-8zM206 458l16 14 22-12 30-4-10 16 4 14-32 4-26 18-8-20zM214 528l24 4-16 22z" />

      {/* unicorn */}
      <path d="M706 220l40 58" stroke={ink} strokeWidth="6" strokeDasharray="10 2" />
      <path d="M690 322q4-14 20-14 12-20 30-22l0-10 12 6 16-6 4 14 18 2 2 16 14 14-2 20 10 16-8 16 2 20-16 10-10-10-32-12-48 2q-12-12-18-16l6-12 20-14-12-4-18 2z" />
      <path d="M686 362q40 26 106 28l-4 22q-56-6-100-34z" fill={paper} stroke={ink} strokeWidth="4" />
      <path d="M694 374q40 24 92 26" fill="none" stroke={ink} strokeWidth="9" strokeDasharray="5 7" />
      <path d="M650 448q14-36 66-46l52 12q36 24 46 60l4 40-6 26 8 24 12 14-10 32 2 40-28 24-24 2 8-18 18-26-4-30-16-24-20-20-22 10-18 30-12-4 18-18-14 12-50 26-30 14 14-22 30-14 10-20 0-38 50-4 12-26-24-34-46-14-26 10-12 32 4 28-20-8z" />
      <path d="M706 308l10 4M772 300l-10 10M782 316l-8 10M790 334l-10 8M790 356l-12 2M738 292l8 2M704 340l12-2" fill="none" stroke={paper} strokeWidth="5" />
      <path d="M852 360q-38 26-32 64 30 26 44 46 22 14 18 40-6 26-30 24-20-10-34-30" fill="none" stroke={ink} strokeWidth="9" />
      <path d="M888 348l-16 26-24 4 6-14-22 4-18 28 10 14 16-12 14 4 16-14 18-10zM886 458l-16 14-24-12-26-4 8 16-4 14 34 6 26 18zM870 528l-24 4 22 30z" />
      <path d="M780 452q30-6 32 20-4 50-30 80-26 22-30 50v36" fill="none" stroke={paper} strokeWidth="13" />
      <path d="M780 452q30-6 32 20-4 50-30 80-26 22-30 50v36" fill="none" stroke={ink} strokeWidth="12" strokeDasharray="22 3" />
      <path d="M780 452q30-6 32 20-4 50-30 80-26 22-30 50v36" fill="none" stroke={paper} strokeWidth="4" strokeDasharray="15 10" strokeDashoffset="-4" />
      <circle cx="750" cy="658" r="13" fill={paper} stroke={ink} strokeWidth="5" />

      {/* scrolls */}
      <path d="M258 682q60 10 110-10l92-16q16 18 14 42-60-2-88 8l-80 14q-30-2-48-38zM816 682q-50 8-108-8l-84-18q-20 20-24 42 50-6 86 8l90 14q28-2 40-38z" />
      <path d="M440 690l20 48q78 22 156 0l20-48-30 16h-130z" fill={paper} stroke={ink} strokeWidth="4" />
      <path d="M466 720q20-18 44-4l6 28q-40 2-50-24zM608 720q-20-18-44-4l-6 28q40 2 50-24z" />

      {/* garter and shield */}
      <ellipse cx="540" cy="512" rx="156" ry="148" fill={paper} stroke={ink} strokeWidth="4" />
      <ellipse cx="540" cy="512" rx="120" ry="116" fill="none" stroke={ink} strokeWidth="3" />
      <path id="garter" d="M446 606A130 122 0 1 1 634 606" fill="none" />
      <text fontFamily="'Liberation Sans', sans-serif" fontSize="37" fill={ink}>
        <textPath href="#garter" textLength="570">HONI SOIT QUI MAL Y PENSE</textPath>
      </text>
      <path d="M436 402h210v120q0 74-105 124-105-50-105-124z" fill={paper} stroke={ink} strokeWidth="4" />
      <path d="M541 402v244M436 510h210" stroke={ink} strokeWidth="4" />
      <g fill="none" stroke={ink}>
        <rect x="552" y="412" width="82" height="86" strokeWidth="4" />
        <rect x="560" y="420" width="66" height="70" strokeWidth="3" />
        <path d="M570 436l12 2 4-8 12 10-6 14 14 8 12-16M578 450l10 6-14 14 10 10M592 458l6 22 12-8M606 432l8 14" strokeWidth="6" />
        {[418, 452, 484].map((y) => (
          <path key={y} d={`M446 ${y + 2}l10-8 14 6 16-4 22 8 22-6M450 ${y + 12}l12-4 12 8 18-8 14 6 22 2M456 ${y - 4}l4 20M494 ${y}l-6 16M520 ${y}l6 14`} strokeWidth="5" />
        ))}
        {[526, 556, 588].map((y, i) => (
          <path key={y} d={`M552 ${y + 2}l10-8 14 6 16-4 ${i === 2 ? 10 : 40} 2M554 ${y + 12}l12-4 12 8 18-8 ${i === 2 ? 6 : 32} 4M560 ${y - 4}l4 20M590 ${y}l-6 16`} strokeWidth="5" />
        ))}
        <path d="M462 524q16 12 12 30-8 20 4 38 20 14 40 20l10-60M460 522l60-2q10 6 10 20M448 540l10 6M448 556l12 2M452 580l12-6M464 600l10-8" strokeWidth="8" />
        <path d="M480 536l44 44M478 546l40 42M478 556l36 38M482 570l26 26M488 530l38 38M498 530l28 28M508 530l18 16" strokeWidth="3" />
      </g>

      {/* belt */}
      <path d="M446 616q14-14 36 0 36 22 88 28 34 2 44-16l8-8q-2 36-30 40l-16 4 2 26-26 2q-60-6-100-48z" fill={paper} stroke={ink} strokeWidth="4" />
      <circle cx="466" cy="628" r="13" fill={paper} stroke={ink} strokeWidth="5" />
      <circle cx="502" cy="652" r="5" />
      <circle cx="536" cy="667" r="5" />
      <path d="M514 684v28q4 32 24 34 20-2 24-34l-6-20-14-4z" fill={paper} stroke={ink} strokeWidth="4" />
      <path d="M526 708q-2 24 12 26 14-2 12-26" fill="none" stroke={ink} strokeWidth="5" />
      <circle cx="538" cy="700" r="4" />

      <g fill={paper} fontFamily="'Liberation Sans', sans-serif" fontWeight="700" fontSize="34">
        <text transform="translate(306 712) rotate(-10)" textLength="142" lengthAdjust="spacingAndGlyphs">DIEU ET</text>
        <text transform="translate(620 686) rotate(8)" textLength="172" lengthAdjust="spacingAndGlyphs" fontSize="32">MON DROIT</text>
      </g>
    </svg>
  );
}

function OglLogo() {
  return (
    <svg viewBox="18 30 246 101" className="mb-[3px] h-[34px] w-[82px]" fill="none" stroke="#0b0c0c" strokeWidth="25">
      <circle cx="67" cy="80" r="36" />
      <path d="M184 56a36 36 0 1 0 2 44" />
      <path d="M158 83h42v47l-14-13-10 4V106l-6-4z" fill="#0b0c0c" stroke="none" />
      <path d="M207 48l27-16v74h30v24h-57z" fill="#0b0c0c" stroke="none" />
    </svg>
  );
}

function Toggle({ title, checked }: { title: string; checked?: boolean }) {
  return (
    <section className="mb-[66px]">
      <h3 className="text-[38px] leading-[46px] font-bold tracking-[0.1px]">{title}</h3>
      <div className="mt-[26px] ml-[4px] flex h-20 items-center gap-[33px]">
        <span
          className={
            checked
              ? "flex size-20 items-center justify-center border-8 border-[#0b0c0c] bg-white outline-[6px] outline-[#f8dd4a] outline-solid"
              : "size-20 border-4 border-[#0b0c0c] bg-white"
          }
        >
          {checked && (
            <svg viewBox="0 0 64 64" className="size-16" fill="none" stroke="#0b0c0c" strokeWidth="10">
              <path d="M10 30l14 14L52 18" />
            </svg>
          )}
        </span>
        <span className="text-[38px] leading-[50px] tracking-[-0.85px]">Toggled on</span>
      </div>
    </section>
  );
}

export default function App() {
  return (
    <div className="h-[2150px] w-[3456px] overflow-hidden bg-white font-[Roboto,sans-serif] text-[#0b0c0c]">
      <header className="h-[153px] bg-[#0b0c0c] text-white">
        <div className="ml-[750px] flex h-full w-[2340px] items-center justify-between">
          <div className="flex items-center">
            <HeaderCrest />
            <span className="mt-[2px] ml-[22px] text-[48px] leading-[60px] font-bold tracking-[-1px]">HMPPS</span>
            <span className="mt-[2px] ml-[21px] text-[48px] leading-[60px] tracking-[-0.55px]">HMPPS Electronic Monitoring Crime Matching</span>
            <span className="mt-[3px] flex h-[60px] w-[91px] items-center justify-center bg-[#c1d4e8] text-[38px] text-[#14294a]">dev</span>
          </div>
          <div className="flex items-center">
            <div className="flex flex-col items-end">
              <span className="text-[38px] leading-[46px] tracking-[-1.1px]">J. Smith</span>
              <span className="text-[32px] leading-[42px] tracking-[-0.7px]">Manage your details</span>
            </div>
            <div className="ml-[41px] h-[93px] w-[2px] bg-white" />
            <span className="ml-[40px] text-[38px] leading-[46px] tracking-[-0.3px]">Sign out</span>
          </div>
        </div>
      </header>

      <nav className="h-[132px] border-b-2 border-[#b1b4b6] bg-[#f3f2f1]">
        <div className="ml-[750px] flex h-full w-[2340px] items-center justify-center gap-[60px] pt-[3px] text-[38px] tracking-[-0.65px] text-[#2a5fa5]">
          <a>Crime mapping</a>
          <a>Location data</a>
          <a>Legal</a>
          <a>Help</a>
        </div>
      </nav>

      <main className="ml-[750px] h-[1401px] w-[2340px] pt-[140px]">
        <h1 className="h-20 text-[75px] leading-[80px] font-bold tracking-[0.74px] whitespace-nowrap">Welcome to Electronic Monitoring Crime Matching</h1>
        <div className="-mt-[18px] flex">
          <div className="relative h-[1041px] w-[1642px]">
            <div className="h-[1037px] border-r-2 border-[#b1b4b6]">
              <StreetMap />
            </div>
            <div className="h-1 w-[1640px] bg-[#0b0c0c]" />
            <div className="h-3 w-[1640px] bg-linear-to-b from-[#f2f2f2] to-white" />
            <svg viewBox="0 0 48 28" className="absolute top-[1037px] left-[796px] h-7 w-12">
              <path d="M0 0L24 28L48 0Z" fill="#0b0c0c" />
              <path d="M3 0L24 22L45 0Z" fill="#fff" />
            </svg>
            <div className="absolute top-[9px] left-0 flex flex-col gap-[6px]">
              <div className="flex gap-[1px]">
                <span className="flex h-[42px] w-[47px] items-center justify-center rounded-md border-2 border-[#6b6b6b] bg-[#efefef] pb-[3px] font-['Liberation_Sans'] text-[27px] text-black">+</span>
                <span className="flex h-[42px] w-[45px] items-center justify-center rounded-md border-2 border-[#6b6b6b] bg-[#efefef] pb-[3px] font-['Liberation_Sans'] text-[27px] text-black">–</span>
              </div>
              <span className="flex h-[45px] w-[59px] items-center justify-center rounded-md border-2 border-[#6b6b6b] bg-[#efefef] pb-[2px]">
                <svg viewBox="0 0 20 22" className="h-[22px] w-5" fill="none" stroke="#000" strokeWidth="2">
                  <path d="M10 1.5L18.5 10.5H14V20.5H6V10.5H1.5Z" />
                </svg>
              </span>
            </div>
          </div>
          <aside className="ml-[30px] pt-[42px]">
            <h2 className="mb-11 text-[48px] leading-[56px] font-bold tracking-[-0.25px]">Enhanced Analysis</h2>
            <Toggle title="Show locations" />
            <Toggle title="Show confidence circles" />
            <Toggle title="Show tracks" checked />
          </aside>
        </div>
      </main>

      <footer className="h-[464px] border-t-[20px] border-[#386eb4] bg-[#f3f2f1]">
        <div className="ml-[750px] flex h-[344px] w-[2340px] items-end justify-between text-[32px] leading-[40px]">
          <div className="flex items-center">
            <OglLogo />
            <p className="ml-[26px] tracking-[-0.44px]">
              All content is available under the{" "}
              <a className="underline decoration-2 underline-offset-[5px] [text-decoration-skip-ink:none] tracking-[-0.25px]">Open Government Licence v3.0</a>
              , except where otherwise stated
            </p>
          </div>
          <div className="flex flex-col items-center">
            <FooterCrest />
            <a className="mt-5 underline decoration-2 underline-offset-[5px] [text-decoration-skip-ink:none] tracking-[-0.2px]">© Crown copyright</a>
          </div>
        </div>
      </footer>
    </div>
  );
}
